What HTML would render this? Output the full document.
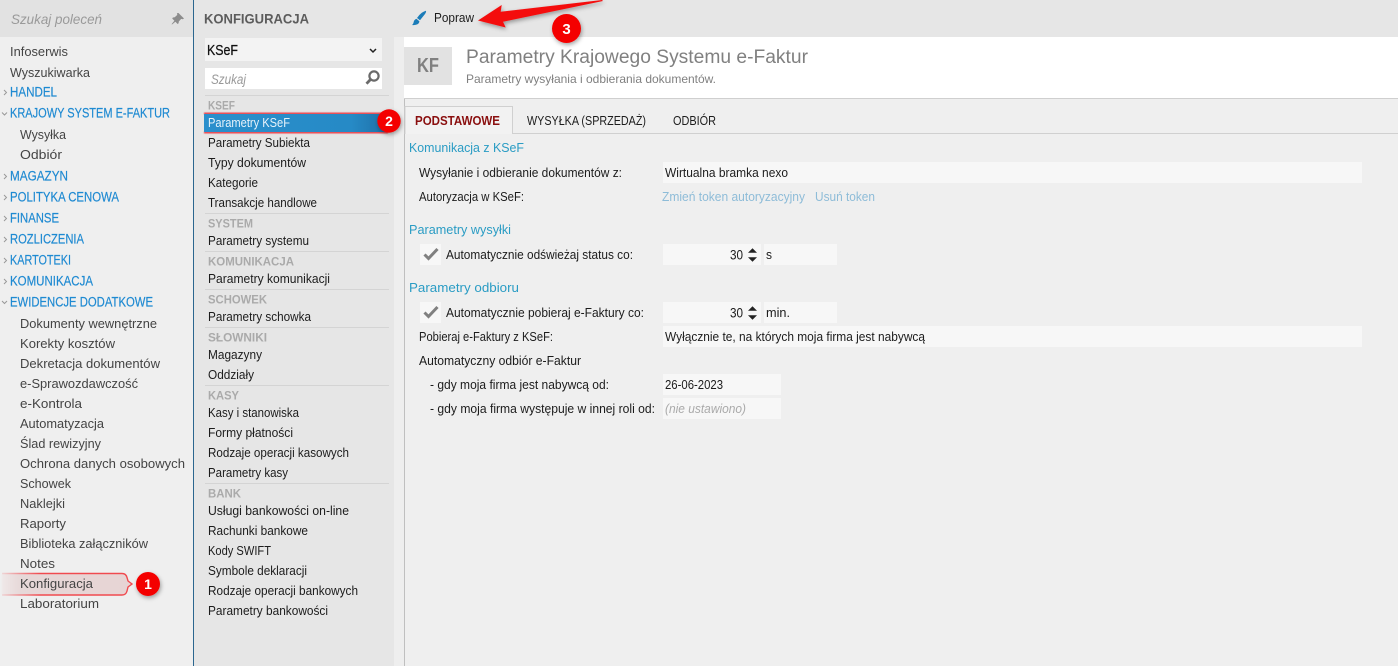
<!DOCTYPE html>
<html lang="pl"><head><meta charset="utf-8"><title>Konfiguracja</title>
<style>
html,body{margin:0;padding:0;width:1398px;height:666px;overflow:hidden;background:#efefef}
svg{display:block}
text{font-family:"Liberation Sans",sans-serif;font-size:13px;fill:#333;white-space:pre}
.n{fill:#444}.h{fill:#1f8ad2;font-size:13.500px;stroke:#1f8ad2;stroke-width:.2px;transform:translateY(-.5px)}.m{fill:#1c1c1c}
.g{fill:#aaa;font-weight:bold;font-size:12px;transform:translateY(-.5px)}
.s{fill:#2a9cc4;font-size:13px}.l{fill:#1c1c1c}.k{fill:#8ebcd8}
</style></head><body>
<svg width="1398" height="666" viewBox="0 0 1398 666" xmlns="http://www.w3.org/2000/svg">
<defs>
<filter id="sh" x="-40%" y="-40%" width="200%" height="200%"><feDropShadow dx="1" dy="2" stdDeviation="2" flood-color="#000" flood-opacity=".35"/></filter>
<filter id="gl" x="-5%" y="-60%" width="110%" height="220%"><feGaussianBlur stdDeviation=".6"/></filter>
<linearGradient id="pk" gradientUnits="userSpaceOnUse" x1="2" x2="130" y1="0" y2="0"><stop offset="0" stop-color="#efe8e8"/><stop offset=".15" stop-color="#e6d8d8"/><stop offset="1" stop-color="#e7d4d4"/></linearGradient>
<linearGradient id="rd" gradientUnits="userSpaceOnUse" x1="2" x2="40" y1="0" y2="0"><stop offset="0" stop-color="#f04a4f" stop-opacity=".15"/><stop offset="1" stop-color="#f04a4f"/></linearGradient>
<linearGradient id="sel" x1="0" x2="1" y1="0" y2="0"><stop offset="0" stop-color="#2a8fcc"/><stop offset=".8" stop-color="#268ac6"/><stop offset="1" stop-color="#1f6fa6"/></linearGradient>
</defs>
<rect width="1398" height="666" fill="#efefef"/>
<rect width="193" height="37" fill="#e2e2e2"/>
<rect x="194" width="1204" height="37" fill="#e6e6e6"/>
<rect x="194" y="0" width="200" height="666" fill="#e6e6e6"/>
<rect x="394" y="37" width="10" height="629" fill="#eeeeee"/>
<rect x="193" width="1" height="666" fill="#2b668f"/>
<rect x="404" y="37" width="1" height="629" fill="#bfbfbf"/>

<!-- left -->
<text x="11" y="24" textLength="91" lengthAdjust="spacingAndGlyphs" style="font-size:14px;font-style:italic;fill:#9a9a9a">Szukaj poleceń</text>
<path d="M178.500 13l5.500 5.500-1.200 .8-1.600-.4-2.400 2.600-.2 1.800-1 .7-2.200-2.300-3.400 2.800-.4-.4 2.800-3.400-2.200-2.200.7-1 1.800-.2 2.600-2.400-.4-1.600z" fill="#8c8c8c"/>

<text class="n" x="10" y="56" textLength="58" lengthAdjust="spacingAndGlyphs">Infoserwis</text>
<text class="n" x="10" y="77" textLength="80" lengthAdjust="spacingAndGlyphs">Wyszukiwarka</text>
<text class="h" x="10" y="97" textLength="47" lengthAdjust="spacingAndGlyphs">HANDEL</text>
<text class="h" x="10" y="118" textLength="160" lengthAdjust="spacingAndGlyphs">KRAJOWY SYSTEM E-FAKTUR</text>
<text class="n" x="20" y="139" textLength="46" lengthAdjust="spacingAndGlyphs">Wysyłka</text>
<text class="n" x="20" y="159" textLength="42" lengthAdjust="spacingAndGlyphs">Odbiór</text>
<text class="h" x="10" y="181" textLength="58" lengthAdjust="spacingAndGlyphs">MAGAZYN</text>
<text class="h" x="10" y="202" textLength="109" lengthAdjust="spacingAndGlyphs">POLITYKA CENOWA</text>
<text class="h" x="10" y="223" textLength="49" lengthAdjust="spacingAndGlyphs">FINANSE</text>
<text class="h" x="10" y="244" textLength="74" lengthAdjust="spacingAndGlyphs">ROZLICZENIA</text>
<text class="h" x="10" y="265" textLength="61" lengthAdjust="spacingAndGlyphs">KARTOTEKI</text>
<text class="h" x="10" y="286" textLength="83" lengthAdjust="spacingAndGlyphs">KOMUNIKACJA</text>
<text class="h" x="10" y="307" textLength="143" lengthAdjust="spacingAndGlyphs">EWIDENCJE DODATKOWE</text>
<g fill="none" stroke="#999" stroke-width="1">
<path d="M4 90l2.500 2.500L4 95M4 174l2.500 2.500L4 179M4 195l2.500 2.500L4 200M4 216l2.500 2.500L4 221M4 237l2.500 2.500L4 242M4 258l2.500 2.500L4 263M4 279l2.500 2.500L4 284"/>
<path d="M2 112.500l2.500 2.500 2.500-2.500M2 301l2.500 2.500 2.500-2.500"/>
</g>
<text class="n" x="20" y="328" textLength="137" lengthAdjust="spacingAndGlyphs">Dokumenty wewnętrzne</text>
<text class="n" x="20" y="348" textLength="95" lengthAdjust="spacingAndGlyphs">Korekty kosztów</text>
<text class="n" x="20" y="368" textLength="140" lengthAdjust="spacingAndGlyphs">Dekretacja dokumentów</text>
<text class="n" x="20" y="388" textLength="118" lengthAdjust="spacingAndGlyphs">e-Sprawozdawczość</text>
<text class="n" x="20" y="408" textLength="62" lengthAdjust="spacingAndGlyphs">e-Kontrola</text>
<text class="n" x="20" y="428" textLength="84" lengthAdjust="spacingAndGlyphs">Automatyzacja</text>
<text class="n" x="20" y="448" textLength="81" lengthAdjust="spacingAndGlyphs">Ślad rewizyjny</text>
<text class="n" x="20" y="468" textLength="165" lengthAdjust="spacingAndGlyphs">Ochrona danych osobowych</text>
<text class="n" x="20" y="488" textLength="51" lengthAdjust="spacingAndGlyphs">Schowek</text>
<text class="n" x="20" y="508" textLength="45" lengthAdjust="spacingAndGlyphs">Naklejki</text>
<text class="n" x="20" y="528" textLength="46" lengthAdjust="spacingAndGlyphs">Raporty</text>
<text class="n" x="20" y="548" textLength="128" lengthAdjust="spacingAndGlyphs">Biblioteka załączników</text>
<text class="n" x="20" y="568" textLength="35" lengthAdjust="spacingAndGlyphs">Notes</text>
<path d="M2 574H122q4 0 5 4l1 3 4 3-4 3-1 4q-1 4-5 4H2z" fill="url(#pk)" filter="url(#gl)"/>
<path d="M2 573.500H122q4 0 5 4l1 3.500 4 3-4 3-1 4q-1 4-5 4H2" fill="none" stroke="url(#rd)" stroke-width="1.400"/>
<text class="n" x="20" y="588" textLength="73" lengthAdjust="spacingAndGlyphs">Konfiguracja</text>
<text class="n" x="20" y="608" textLength="79" lengthAdjust="spacingAndGlyphs">Laboratorium</text>
<circle cx="148" cy="584" r="12" fill="#f40000" filter="url(#sh)"/>
<text x="148" y="589" text-anchor="middle" style="font-size:14px;font-weight:bold;fill:#fff">1</text>

<!-- middle -->
<text x="204" y="23.500" textLength="105" lengthAdjust="spacingAndGlyphs" style="font-size:14px;font-weight:bold;fill:#5c5c5c">KONFIGURACJA</text>
<rect x="205" y="38" width="177" height="23" fill="#f3f3f3"/>
<text x="207" y="55" textLength="31" lengthAdjust="spacingAndGlyphs" style="font-size:15px;fill:#111;stroke:#111;stroke-width:.25px">KSeF</text>
<path d="M370 49l3 3 3-3" fill="none" stroke="#222" stroke-width="1.500"/>
<rect x="205" y="68" width="177" height="21" fill="#fff"/>
<text x="211" y="84" textLength="35" lengthAdjust="spacingAndGlyphs" style="font-style:italic;fill:#999;font-size:13.500px">Szukaj</text>
<circle cx="374" cy="76" r="4.600" fill="none" stroke="#6a6a6a" stroke-width="2.200"/>
<path d="M370.500 79.500l-4 4.200" stroke="#6a6a6a" stroke-width="2.800"/>
<g fill="#d4d4d4">
<rect x="205" y="95" width="184" height="1"/><rect x="205" y="213" width="184" height="1"/><rect x="205" y="251" width="184" height="1"/><rect x="205" y="289" width="184" height="1"/><rect x="205" y="327" width="184" height="1"/><rect x="205" y="385" width="184" height="1"/><rect x="205" y="483" width="184" height="1"/>
</g>
<text class="g" x="208" y="110" textLength="27" lengthAdjust="spacingAndGlyphs">KSEF</text>
<path d="M204 113.500H388M204 132.500H388" stroke="#e8454e" stroke-width="2" filter="url(#gl)"/>
<rect x="204" y="114" width="184" height="18" fill="url(#sel)"/>
<text x="208" y="127" textLength="82" lengthAdjust="spacingAndGlyphs" style="fill:#e6f2fa">Parametry KSeF</text>
<circle cx="389" cy="121" r="11.700" fill="#f40000" filter="url(#sh)"/>
<text x="389" y="126" text-anchor="middle" style="font-size:14px;font-weight:bold;fill:#fff">2</text>
<text class="m" x="208" y="147" textLength="102" lengthAdjust="spacingAndGlyphs">Parametry Subiekta</text>
<text class="m" x="208" y="167" textLength="98" lengthAdjust="spacingAndGlyphs">Typy dokumentów</text>
<text class="m" x="208" y="187" textLength="50" lengthAdjust="spacingAndGlyphs">Kategorie</text>
<text class="m" x="208" y="207" textLength="109" lengthAdjust="spacingAndGlyphs">Transakcje handlowe</text>
<text class="g" x="208" y="228" textLength="45" lengthAdjust="spacingAndGlyphs">SYSTEM</text>
<text class="m" x="208" y="245" textLength="101" lengthAdjust="spacingAndGlyphs">Parametry systemu</text>
<text class="g" x="208" y="266" textLength="86" lengthAdjust="spacingAndGlyphs">KOMUNIKACJA</text>
<text class="m" x="208" y="283" textLength="122" lengthAdjust="spacingAndGlyphs">Parametry komunikacji</text>
<text class="g" x="208" y="304" textLength="59" lengthAdjust="spacingAndGlyphs">SCHOWEK</text>
<text class="m" x="208" y="321" textLength="103" lengthAdjust="spacingAndGlyphs">Parametry schowka</text>
<text class="g" x="208" y="342" textLength="59" lengthAdjust="spacingAndGlyphs">SŁOWNIKI</text>
<text class="m" x="208" y="359" textLength="54" lengthAdjust="spacingAndGlyphs">Magazyny</text>
<text class="m" x="208" y="379" textLength="46" lengthAdjust="spacingAndGlyphs">Oddziały</text>
<text class="g" x="208" y="400" textLength="31" lengthAdjust="spacingAndGlyphs">KASY</text>
<text class="m" x="208" y="417" textLength="91" lengthAdjust="spacingAndGlyphs">Kasy i stanowiska</text>
<text class="m" x="208" y="437" textLength="85" lengthAdjust="spacingAndGlyphs">Formy płatności</text>
<text class="m" x="208" y="457" textLength="141" lengthAdjust="spacingAndGlyphs">Rodzaje operacji kasowych</text>
<text class="m" x="208" y="477" textLength="80" lengthAdjust="spacingAndGlyphs">Parametry kasy</text>
<text class="g" x="208" y="498" textLength="33" lengthAdjust="spacingAndGlyphs">BANK</text>
<text class="m" x="208" y="515" textLength="141" lengthAdjust="spacingAndGlyphs">Usługi bankowości on-line</text>
<text class="m" x="208" y="535" textLength="100" lengthAdjust="spacingAndGlyphs">Rachunki bankowe</text>
<text class="m" x="208" y="555" textLength="63" lengthAdjust="spacingAndGlyphs">Kody SWIFT</text>
<text class="m" x="208" y="575" textLength="99" lengthAdjust="spacingAndGlyphs">Symbole deklaracji</text>
<text class="m" x="208" y="595" textLength="150" lengthAdjust="spacingAndGlyphs">Rodzaje operacji bankowych</text>
<text class="m" x="208" y="615" textLength="120" lengthAdjust="spacingAndGlyphs">Parametry bankowości</text>

<!-- toolbar -->
<path d="M426 10.800q.4 1.200-1 3.200l-5 6.200-3-2.200q2.400-3.400 4.800-5.200 2.400-1.600 4.200-2zM416.400 18.800l3 2.400q-.2 2.200-2.200 3.200-2.400 1-5.200.6 1.400-1 1.600-2.600.4-2.600 2.800-3.600z" fill="#1b7cb8"/>
<text class="m" x="434" y="22" textLength="40" lengthAdjust="spacingAndGlyphs">Popraw</text>
<polygon points="478,20.500 501.700,5 500.700,11.700 602,0 603,1 503,21.700 505.700,27.500" fill="#f40f0f" filter="url(#sh)"/>

<!-- header -->
<rect x="404" y="37" width="994" height="61" fill="#fff"/>
<rect x="404" y="98" width="994" height="1" fill="#cfcfcf"/>
<rect x="404" y="47" width="48" height="38" fill="#e2e2e2"/>
<text x="417" y="72" textLength="22" lengthAdjust="spacingAndGlyphs" style="font-size:20px;font-weight:bold;fill:#808080">KF</text>
<text x="466" y="63" textLength="342" lengthAdjust="spacingAndGlyphs" style="font-size:19px;fill:#808080">Parametry Krajowego Systemu e-Faktur</text>
<text x="466" y="83" textLength="250" lengthAdjust="spacingAndGlyphs" style="font-size:12px;fill:#808080">Parametry wysyłania i odbierania dokumentów.</text>
<circle cx="566.500" cy="28.500" r="14.500" fill="#f40000" filter="url(#sh)"/>
<text x="566.500" y="34" text-anchor="middle" style="font-size:15px;font-weight:bold;fill:#fff">3</text>

<!-- tabs -->
<rect x="405" y="133" width="993" height="1" fill="#d0d0d0"/>
<path d="M405 134V106.500H512.500V134" fill="#f2f2f2" stroke="#d0d0d0"/>
<text x="415" y="125" textLength="85" lengthAdjust="spacingAndGlyphs" style="font-weight:bold;fill:#8a0f0f;font-size:13px">PODSTAWOWE</text>
<text class="m" x="527" y="125" textLength="119" lengthAdjust="spacingAndGlyphs">WYSYŁKA (SPRZEDAŻ)</text>
<text class="m" x="673" y="125" textLength="43" lengthAdjust="spacingAndGlyphs">ODBIÓR</text>

<!-- form -->
<g fill="#f7f7f7">
<rect x="663" y="162" width="699" height="21"/>
<rect x="420" y="244" width="21" height="21"/><rect x="663" y="244" width="98" height="21"/><rect x="764" y="244" width="73" height="21"/>
<rect x="420" y="302" width="21" height="21"/><rect x="663" y="302" width="98" height="21"/><rect x="764" y="302" width="73" height="21"/>
<rect x="663" y="326" width="699" height="21"/>
<rect x="663" y="374" width="118" height="21"/><rect x="663" y="398" width="118" height="21"/>
</g>
<text class="s" x="409" y="152" textLength="115" lengthAdjust="spacingAndGlyphs">Komunikacja z KSeF</text>
<text class="l" x="419" y="177" textLength="203" lengthAdjust="spacingAndGlyphs">Wysyłanie i odbieranie dokumentów z:</text>
<text class="l" x="665" y="177" textLength="123" lengthAdjust="spacingAndGlyphs">Wirtualna bramka nexo</text>
<text class="l" x="419" y="201" textLength="105" lengthAdjust="spacingAndGlyphs">Autoryzacja w KSeF:</text>
<text class="k" x="662" y="201" textLength="143" lengthAdjust="spacingAndGlyphs">Zmień token autoryzacyjny</text>
<text class="k" x="815" y="201" textLength="60" lengthAdjust="spacingAndGlyphs">Usuń token</text>
<text class="s" x="409" y="234" textLength="102" lengthAdjust="spacingAndGlyphs">Parametry wysyłki</text>
<path d="M424.500 254.500l4 4 9-9.500" fill="none" stroke="#808080" stroke-width="3"/>
<text class="l" x="446" y="259" textLength="187" lengthAdjust="spacingAndGlyphs">Automatycznie odświeżaj status co:</text>
<text class="l" x="730" y="259.500" textLength="13" lengthAdjust="spacingAndGlyphs" style="font-size:14px">30</text>
<path d="M752.500 248.300l-4.500 4.400h9zM748 257.300l4.500 4.400 4.500-4.400z" fill="#222"/>
<text class="l" x="766" y="259" textLength="6" lengthAdjust="spacingAndGlyphs">s</text>
<text class="s" x="409" y="292" textLength="110" lengthAdjust="spacingAndGlyphs">Parametry odbioru</text>
<path d="M424.500 312.500l4 4 9-9.500" fill="none" stroke="#808080" stroke-width="3"/>
<text class="l" x="446" y="317" textLength="198" lengthAdjust="spacingAndGlyphs">Automatycznie pobieraj e-Faktury co:</text>
<text class="l" x="730" y="317.500" textLength="13" lengthAdjust="spacingAndGlyphs" style="font-size:14px">30</text>
<path d="M752.500 306.300l-4.500 4.400h9zM748 315.300l4.500 4.400 4.500-4.400z" fill="#222"/>
<text class="l" x="766" y="317" textLength="24" lengthAdjust="spacingAndGlyphs">min.</text>
<text class="l" x="419" y="341" textLength="134" lengthAdjust="spacingAndGlyphs">Pobieraj e-Faktury z KSeF:</text>
<text class="l" x="665" y="341" textLength="260" lengthAdjust="spacingAndGlyphs">Wyłącznie te, na których moja firma jest nabywcą</text>
<text class="l" x="419" y="365" textLength="162" lengthAdjust="spacingAndGlyphs">Automatyczny odbiór e-Faktur</text>
<text class="l" x="430" y="389" textLength="179" lengthAdjust="spacingAndGlyphs">- gdy moja firma jest nabywcą od:</text>
<text class="l" x="665" y="389" textLength="58" lengthAdjust="spacingAndGlyphs">26-06-2023</text>
<text class="l" x="430" y="413" textLength="225" lengthAdjust="spacingAndGlyphs">- gdy moja firma występuje w innej roli od:</text>
<text x="665" y="413" textLength="81" lengthAdjust="spacingAndGlyphs" style="font-style:italic;fill:#aaa">(nie ustawiono)</text>
</svg>
</body></html>
